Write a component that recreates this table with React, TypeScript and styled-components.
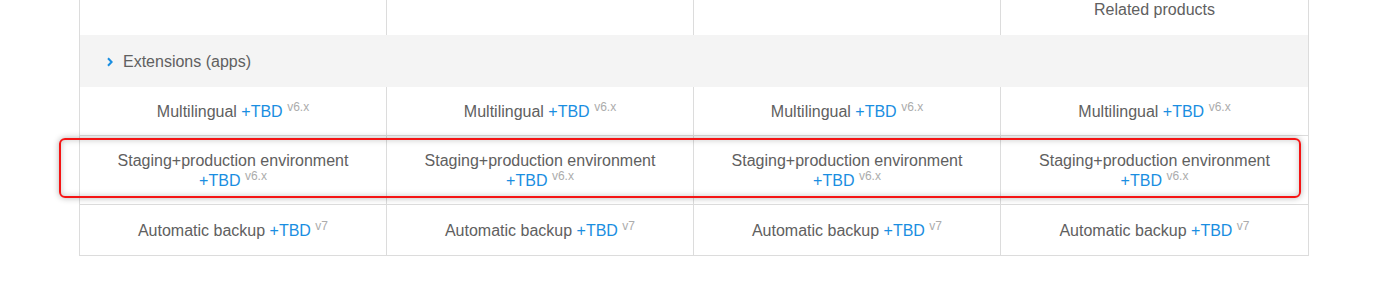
import styled, { createGlobalStyle } from 'styled-components';

const GlobalStyle = createGlobalStyle`
  html, body {
    margin: 0;
    padding: 0;
    background: #fff;
  }
  body {
    font-family: "Liberation Sans", Arial, sans-serif;
  }
`;

const versions = ['v6.x', 'v6.x', 'v6.x', 'v6.x'];

export default function App() {
  return (
    <>
      <GlobalStyle />
      <Page>
        <Table>
          <colgroup>
            <Col $w={307} />
            <Col $w={307} />
            <Col $w={307} />
            <Col $w={308} />
          </colgroup>
          <tbody>
            <HeaderRow>
              <HeaderCell />
              <HeaderCell />
              <HeaderCell />
              <HeaderCell>Related products</HeaderCell>
            </HeaderRow>
            <GroupRow>
              <GroupCell colSpan={4}>
                <Chevron viewBox="0 0 6 10" aria-hidden>
                  <path d="M1 1.2 L4.6 5 L1 8.8" fill="none" stroke="#1a8ee1" strokeWidth="2" />
                </Chevron>
                Extensions (apps)
              </GroupCell>
            </GroupRow>
            <Row>
              {versions.map((v, i) => (
                <Cell key={i} $first>
                  Multilingual <Tbd>+TBD</Tbd> <Version>{v}</Version>
                </Cell>
              ))}
            </Row>
            <Row>
              {versions.map((v, i) => (
                <Cell key={i}>
                  Staging+production environment
                  <br />
                  <Tbd>+TBD</Tbd> <Version>{v}</Version>
                </Cell>
              ))}
            </Row>
            <Row>
              {[0, 1, 2, 3].map((i) => (
                <Cell key={i} $last>
                  Automatic backup <Tbd>+TBD</Tbd> <Version>v7</Version>
                </Cell>
              ))}
            </Row>
          </tbody>
        </Table>
        <Highlight />
      </Page>
    </>
  );
}

const Page = styled.div`
  position: relative;
  width: 1381px;
  height: 302px;
  padding-left: 79px;
  box-sizing: border-box;
`;

const Table = styled.table`
  width: 1230px;
  table-layout: fixed;
  border-collapse: collapse;
  border-left: 1px solid #dcdcdc;
  border-right: 1px solid #dcdcdc;
  color: #606060;
  font-size: 16px;
  line-height: 20px;
`;

const Col = styled.col<{ $w: number }>`
  width: ${(p) => p.$w}px;
`;

const HeaderRow = styled.tr`
  height: 35px;
`;

const HeaderCell = styled.td`
  vertical-align: top;
  text-align: center;
  padding: 0;
  border-right: 1px solid #dcdcdc;

  &:last-child {
    border-right: none;
  }
`;

const GroupRow = styled.tr`
  background: #f4f4f4;
`;

const GroupCell = styled.td`
  height: 52px;
  box-sizing: border-box;
  padding: 2px 0 0 27px;
  vertical-align: middle;
`;

const Chevron = styled.svg`
  width: 6px;
  height: 10px;
  margin-right: 10px;
  vertical-align: 0px;
`;

const Row = styled.tr`
  border-bottom: 1px solid #dcdcdc;
`;

const Cell = styled.td<{ $first?: boolean; $last?: boolean }>`
  padding: ${(p) => (p.$last ? '16px 8px 14px' : '15px 8px 13px')};
  text-align: center;
  vertical-align: middle;
  border-right: 1px solid #dcdcdc;
  border-top: ${(p) => (p.$first ? 'none' : '1px solid #dcdcdc')};

  &:last-child {
    border-right: none;
  }
`;

const Tbd = styled.span`
  color: #1a8ee1;
`;

const Version = styled.sup`
  font-size: 12px;
  line-height: 0;
  color: #acacac;
  vertical-align: 6px;
`;

const Highlight = styled.div`
  position: absolute;
  left: 59px;
  top: 138px;
  width: 1242px;
  height: 60px;
  box-sizing: border-box;
  border: 2px solid #f41414;
  border-radius: 6px;
  box-shadow: 0 0 6px rgba(0, 0, 0, 0.3), inset 0 0 6px rgba(0, 0, 0, 0.22);
  pointer-events: none;
`;
